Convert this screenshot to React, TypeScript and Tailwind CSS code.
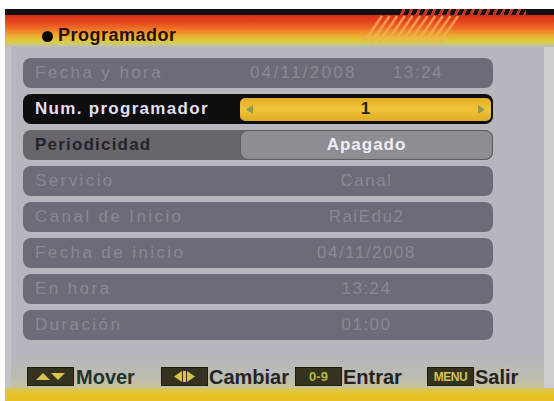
import React from "react";

const font = { fontFamily: '"Liberation Sans", Arial, sans-serif' };

function Row({ label, value }: { label: string; value: React.ReactNode }) {
  return (
    <div className="flex h-[30px] w-[470px] items-center rounded-[8px] bg-[#6d6b77]">
      <div className="w-[217px] pl-[12px] text-[17px] tracking-[2.4px] text-[#8a8894]">{label}</div>
      <div className="flex flex-1 justify-center text-[17px] tracking-[1.5px] text-[#8a8894]">{value}</div>
    </div>
  );
}

function Tri({ dir, color, w = 8, h = 9 }: { dir: "l" | "r" | "u" | "d"; color: string; w?: number; h?: number }) {
  const pts =
    dir === "l"
      ? `${w},0 0,${h / 2} ${w},${h}`
      : dir === "r"
      ? `0,0 ${w},${h / 2} 0,${h}`
      : dir === "u"
      ? `0,${h} ${w / 2},0 ${w},${h}`
      : `0,0 ${w},0 ${w / 2},${h}`;
  return (
    <svg width={w} height={h} viewBox={`0 0 ${w} ${h}`}>
      <polygon points={pts} fill={color} />
    </svg>
  );
}

function Key({ children }: { children: React.ReactNode }) {
  return (
    <div className="flex h-[19px] w-[47px] items-center justify-center border border-[#1c1c12] bg-[#35331f]">
      {children}
    </div>
  );
}

export default function App() {
  const hatch = Array.from({ length: 11 });
  return (
    <div className="h-[401px] w-[554px] overflow-hidden bg-white pl-[5px] pt-[9px]" style={font}>
      <div className="flex h-[392px] flex-col">
        {/* black strip */}
        <div className="flex h-[6px]">
          <div className="w-[393px] bg-[#121010]" />
          <div className="w-[128px] bg-[repeating-linear-gradient(115deg,#121010_0px,#121010_4px,#b83a22_4px,#b83a22_7px)]" />
          <div className="flex-1 bg-[#121010]" />
        </div>
        {/* header */}
        <div className="relative flex h-[32px] items-center bg-[linear-gradient(to_bottom,#d62e1c_0%,#e6421f_20%,#ee6a24_40%,#f09a2e_58%,#e6bc36_72%,#d8cc42_84%,#c6c68c_94%,#b8b8bd_100%)] pl-[37px] pt-[8px]">
          <svg className="absolute left-[345px] top-0" width="120" height="28" viewBox="0 0 120 28">
            {hatch.map((_, i) => (
              <line
                key={i}
                x1={14 + i * 7.6}
                y1={27}
                x2={32 + i * 7.6}
                y2={1}
                stroke="#f6ae52"
                strokeOpacity={0.8}
                strokeWidth={2.6}
              />
            ))}
          </svg>
          <div className="mr-[5px] mt-[3px] h-[11px] w-[11px] rounded-full bg-[#0c0808]" />
          <span className="relative text-[18px] font-bold tracking-[0.5px] text-[#2a0e0a]">Programador</span>
        </div>
        {/* body */}
        <div className="flex h-[341px]">
          <div className="w-[6px] bg-[#c3c3cb]" />
          <div className="flex flex-1 flex-col bg-[linear-gradient(to_bottom,#b6b6be_0%,#b6b6be_90%,#bdbcb0_97%,#c9c49a_100%)] pl-[12px] pt-[11px]">
            <div className="flex flex-col gap-[6px]">
              <div className="flex h-[30px] w-[470px] items-center rounded-[8px] bg-[#6d6b77] text-[#8a8894]">
                <div className="w-[217px] pl-[12px] text-[17px] tracking-[2.4px]">Fecha y hora</div>
                <div className="pl-[10px] text-[17px] tracking-[2.3px]">04/11/2008</div>
                <div className="pl-[36px] text-[17px] tracking-[1.5px]">13:24</div>
              </div>
              <div className="flex h-[30px] w-[470px] items-center rounded-[8px] bg-[#0e0d0f]">
                <div className="w-[215px] pl-[12px] text-[17px] font-bold tracking-[1.3px] text-[#e4def0]">
                  Num. programador
                </div>
                <div className="flex h-[27px] flex-1 items-center justify-between rounded-[7px] border-[2px] border-[#0e0d0f] bg-[linear-gradient(to_bottom,#e2ae26,#f0c43a_50%,#e0aa24)] px-[6px]">
                  <Tri dir="l" color="#8e9a52" w={7} h={9} />
                  <span className="text-[17px] font-bold text-[#2a2210]">1</span>
                  <Tri dir="r" color="#8e9a52" w={7} h={9} />
                </div>
              </div>
              <div className="flex h-[30px] w-[470px] items-center rounded-[8px] bg-[#68666c]">
                <div className="w-[217px] pl-[12px] text-[17px] font-bold tracking-[1.2px] text-[#24232a]">
                  Periodicidad
                </div>
                <div className="flex h-[30px] flex-1 items-center justify-center rounded-[8px] border border-[#5d5c63] bg-[#8e8d93] text-[17px] font-bold tracking-[1px] text-[#eeeef6]">
                  Apagado
                </div>
              </div>
              <Row label="Servicio" value="Canal" />
              <Row label="Canal de Inicio" value="RaiEdu2" />
              <Row label="Fecha de inicio" value="04/11/2008" />
              <Row label="En hora" value="13:24" />
              <Row label="Duración" value="01:00" />
            </div>
            {/* footer */}
            <div className="mt-[27px] flex h-[19px] items-center pl-[4px] text-[20px] font-bold leading-none">
              <div className="flex w-[134px] items-center gap-[2px]">
                <Key>
                  <div className="flex items-center gap-[1px]">
                    <Tri dir="u" color="#d6c44c" w={14} h={7} />
                    <Tri dir="d" color="#d6c44c" w={14} h={7} />
                  </div>
                </Key>
                <span className="text-[#1e3429]">Mover</span>
              </div>
              <div className="flex w-[134px] items-center gap-[1px]">
                <Key>
                  <div className="flex items-center gap-[1px]">
                    <Tri dir="l" color="#d6c44c" w={8} h={11} />
                    <div className="h-[11px] w-[3px] bg-[#d6c44c]" />
                    <Tri dir="r" color="#d6c44c" w={8} h={11} />
                  </div>
                </Key>
                <span className="text-[#23252a]">Cambiar</span>
              </div>
              <div className="flex w-[132px] items-center gap-[1px]">
                <Key>
                  <span className="text-[13px] font-bold text-[#b8b840]">0-9</span>
                </Key>
                <span className="text-[#232323]">Entrar</span>
              </div>
              <div className="flex items-center gap-[1px]">
                <Key>
                  <span className="text-[12px] font-bold tracking-[-0.5px] text-[#d6c44c]">MENU</span>
                </Key>
                <span className="text-[#232323]">Salir</span>
              </div>
            </div>
          </div>
          <div className="w-[10px] bg-[#cdcdd2]" />
        </div>
        {/* bottom yellow */}
        <div className="h-[13px] bg-[linear-gradient(to_bottom,#d6c660,#e8c428_50%,#e6bf22)]" />
      </div>
    </div>
  );
}
